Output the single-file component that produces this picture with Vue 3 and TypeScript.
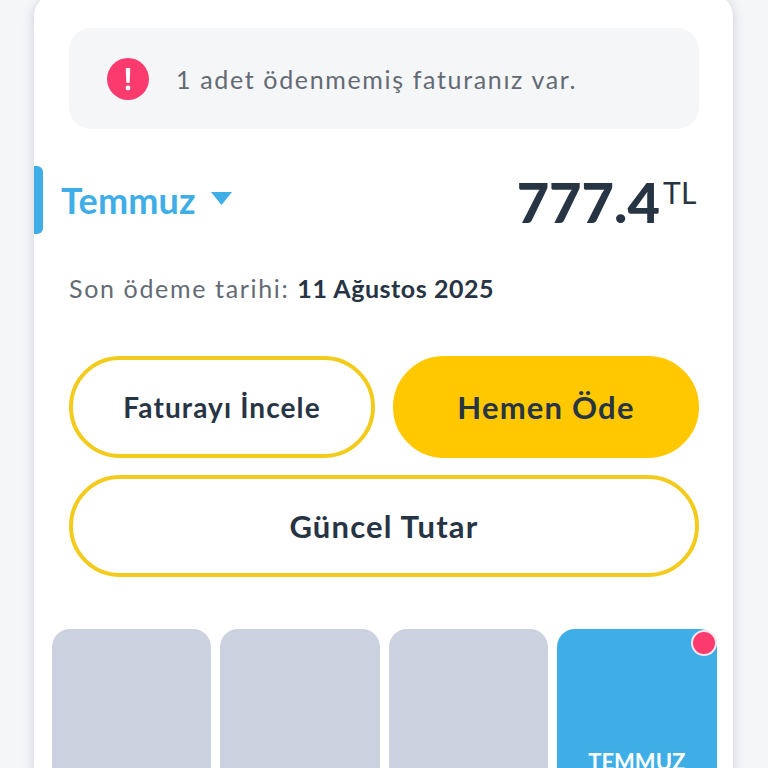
<template>
  <div class="page">
    <div class="card">
      <div class="alert">
        <svg class="alert-icon" width="42" height="42" viewBox="0 0 42 42">
          <circle cx="21" cy="21" r="21" fill="#fb3a6e" />
          <path d="M19.2 10.5h3.6l-.7 14h-2.2z" fill="#fff" stroke="#fff" stroke-linejoin="round" />
          <circle cx="21" cy="30" r="2.4" fill="#fff" />
        </svg>
        <span>1 adet ödenmemiş faturanız var.</span>
      </div>

      <div class="summary">
        <span class="marker"></span>
        <div class="month">
          <span>{{ month }}</span>
          <svg width="21" height="13" viewBox="0 0 21 13"><path d="M0 0h21L10.5 13z" fill="#3faee6" /></svg>
        </div>
        <div class="amount">{{ amount }}<sup>TL</sup></div>
      </div>

      <p class="due">Son ödeme tarihi: <b>11 Ağustos 2025</b></p>

      <div class="actions">
        <button class="btn small">Faturayı İncele</button>
        <button class="btn primary">Hemen Öde</button>
        <button class="btn wide">Güncel Tutar</button>
      </div>

      <div class="months">
        <div v-for="m in months" :key="m.id" class="tile" :class="{ active: m.active }">
          <i v-if="m.active" class="dot"></i>
          <span v-if="m.active">{{ month.toUpperCase() }}</span>
        </div>
      </div>
    </div>
  </div>
</template>

<script setup lang="ts">
const month = 'Temmuz';
const amount = '777.4';
const months = [
  { id: 1, active: false },
  { id: 2, active: false },
  { id: 3, active: false },
  { id: 4, active: true },
];
</script>

<style>
html, body {
  margin: 0;
  background: #f5f6f8;
}
</style>

<style scoped>
.page {
  height: 768px;
  overflow: hidden;
  padding: 0 35px 0 34px;
  background: #f5f6f8;
  font-family: Lato, "Open Sans", sans-serif;
}

.card {
  position: relative;
  height: 800px;
  margin-top: -6px;
  padding-top: 34px;
  box-sizing: border-box;
  background: #fff;
  border-radius: 22px;
  box-shadow: 0 2px 12px rgba(60, 70, 90, 0.22);
}

.alert {
  display: flex;
  align-items: center;
  gap: 27px;
  height: 101px;
  margin: 0 34px 0 35px;
  padding-left: 38px;
  background: #f5f6f8;
  border-radius: 22px;
  color: #636a74;
  font-size: 25px;
  letter-spacing: 1.65px;
}

.summary {
  position: relative;
  display: flex;
  justify-content: space-between;
  align-items: center;
  height: 68px;
  margin-top: 37px;
  padding: 0 36px 0 27px;
}

.marker {
  position: absolute;
  left: 0;
  top: 0;
  width: 9px;
  height: 68px;
  background: #3faee6;
  border-radius: 0 6px 6px 0;
}

.month {
  display: flex;
  align-items: center;
  gap: 15px;
  color: #3faee6;
  font-size: 36px;
  font-weight: 700;
  letter-spacing: 0.2px;
}

.month svg {
  margin-top: -4px;
}

.amount {
  color: #273444;
  font-size: 56px;
  font-weight: 900;
  line-height: 68px;
  margin-top: 4px;
}

.amount sup {
  margin-left: 3px;
  font-size: 30px;
  font-weight: 400;
  line-height: 0;
  vertical-align: 19px;
  letter-spacing: 0.5px;
}

.due {
  margin: 36px 0 0 35px;
  color: #636a74;
  font-size: 25px;
  line-height: 36px;
  letter-spacing: 1.65px;
}

.due b {
  color: #273444;
  font-weight: 700;
  letter-spacing: 0.55px;
}

.actions {
  display: grid;
  grid-template-columns: 306px 306px;
  grid-auto-rows: 102px;
  gap: 17px 18px;
  margin: 50px 34px 0 35px;
}

.btn {
  border: 4px solid #f2cb1c;
  border-radius: 51px;
  background: #fff;
  color: #273444;
  font-family: inherit;
  font-size: 28px;
  font-weight: 700;
  letter-spacing: 1.1px;
  padding: 0;
}

.btn.primary {
  border-color: #ffc800;
  background: #ffc800;
  font-size: 31px;
  letter-spacing: 1.2px;
}

.btn.wide {
  grid-column: 1 / -1;
  font-size: 31px;
  letter-spacing: 1.2px;
}

.months {
  display: grid;
  grid-template-columns: repeat(4, 159.5px);
  gap: 9px;
  margin: 52px 0 0 17.5px;
}

.tile {
  position: relative;
  display: flex;
  justify-content: center;
  height: 200px;
  background: #ccd2e0;
  border-radius: 18px;
}

.tile.active {
  background: #3faee6;
  color: #fff;
  font-size: 22px;
  font-weight: 700;
  padding-top: 119px;
  box-sizing: border-box;
}

.dot {
  position: absolute;
  top: 1px;
  right: 0;
  width: 22px;
  height: 22px;
  background: #fb3a6e;
  border: 2px solid #f3e6ee;
  border-radius: 50%;
}
</style>
